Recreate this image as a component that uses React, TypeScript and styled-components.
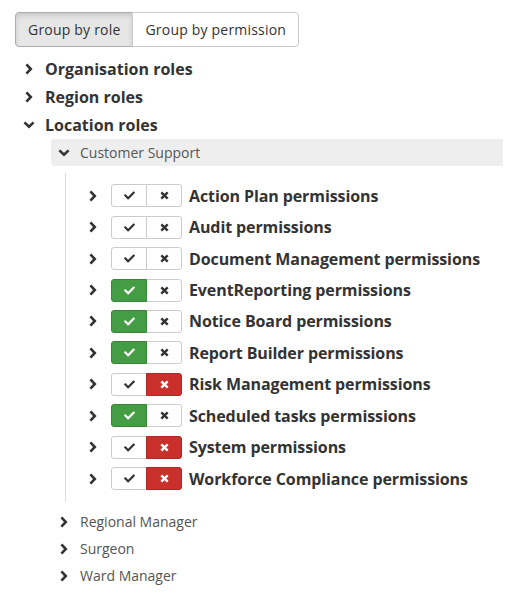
import React, {useState} from 'react'
import styled, {createGlobalStyle, css} from 'styled-components'
import {FaCheck} from 'react-icons/fa'

const GlobalStyle = createGlobalStyle`
  body {
    margin: 0;
    font-family: "Open Sans", "Noto Sans", sans-serif;
    color: #333;
    background: #fff;
  }
`

const Page = styled.div`
  padding: 12px 2px 0 15px;
`

const Toggle = styled.div`
  display: inline-flex;
`

const ToggleButton = styled.button<{ $active?: boolean }>`
  font-family: inherit;
  font-size: 14px;
  letter-spacing: 0.2px;
  line-height: 21px;
  padding: 6px 12px;
  color: #333;
  background: #fff;
  border: 1px solid #ccc;
  cursor: pointer;
  &:first-child {
    border-radius: 4px 0 0 4px;
  }
  &:last-child {
    border-radius: 0 4px 4px 0;
    margin-left: -1px;
  }
  ${p => p.$active && css`
    background: #e6e6e6;
    border-color: #adadad;
    box-shadow: inset 0 3px 5px rgba(0, 0, 0, 0.125);
  `}
`

const Tree = styled.div`
  margin: 8px 0 0 8px;
`

const TopRow = styled.div`
  display: flex;
  align-items: center;
  gap: 10px;
  height: 28px;
  font-size: 16px;
  font-weight: 700;
  color: #333;
`

const RoleList = styled.div`
  margin-left: 28px;
`

const RoleRow = styled.div<{ $open?: boolean }>`
  display: flex;
  align-items: center;
  gap: 10px;
  height: 27px;
  padding-left: 7px;
  font-size: 14px;
  color: #555;
  border-radius: 4px 0 0 4px;
  background: ${p => (p.$open ? '#eee' : 'transparent')};
`

const PermList = styled.div`
  margin: 7px 0 6px 14px;
  padding: 7px 0 8px 21px;
  border-left: 1px solid #ddd;
`

const PermRow = styled.div`
  display: flex;
  align-items: center;
  height: 31.44px;
`

const Label = styled.span`
  margin-left: 7px;
  font-size: 16px;
  font-weight: 700;
  letter-spacing: -0.1px;
  color: #333;
  white-space: nowrap;
`

const Switch = styled.div`
  display: flex;
  margin-left: 12px;
`

const SwitchButton = styled.span<{ $on?: boolean; $kind: 'allow' | 'deny' }>`
  display: flex;
  align-items: center;
  justify-content: center;
  width: 36px;
  height: 23px;
  box-sizing: border-box;
  border: 1px solid #ccc;
  background: #fff;
  color: #333;
  &:first-child {
    border-radius: 3px 0 0 3px;
  }
  &:last-child {
    border-radius: 0 3px 3px 0;
    margin-left: -1px;
  }
  ${p => p.$on && p.$kind === 'allow' && css`
    background: #449d44;
    border-color: #398439;
    color: #fff;
    position: relative;
  `}
  ${p => p.$on && p.$kind === 'deny' && css`
    background: #c9302c;
    border-color: #ac2925;
    color: #fff;
    position: relative;
  `}
`

const ChevronBox = styled.span`
  display: flex;
  align-items: center;
  justify-content: center;
  width: 12px;
  flex: none;
`

function Chevron({open}: { open?: boolean }) {
    return (
        <ChevronBox>
            {open ? (
                <svg width="12" height="8" viewBox="0 0 12 8">
                    <polyline points="1.4,1.4 6,5.8 10.6,1.4" fill="none" stroke="#333" strokeWidth="2.6"/>
                </svg>
            ) : (
                <svg width="8" height="12" viewBox="0 0 8 12">
                    <polyline points="1.4,1.4 5.8,6 1.4,10.6" fill="none" stroke="#333" strokeWidth="2.6"/>
                </svg>
            )}
        </ChevronBox>
    )
}

function Cross() {
    return (
        <svg width="9" height="9" viewBox="0 0 9 9">
            <path d="M1.3 1.3L7.7 7.7M7.7 1.3L1.3 7.7" stroke="currentColor" strokeWidth="2.4"/>
        </svg>
    )
}

type State = 'allow' | 'deny' | 'none'

const permissions: { name: string, state: State }[] = [
    {name: 'Action Plan permissions', state: 'none'},
    {name: 'Audit permissions', state: 'none'},
    {name: 'Document Management permissions', state: 'none'},
    {name: 'EventReporting permissions', state: 'allow'},
    {name: 'Notice Board permissions', state: 'allow'},
    {name: 'Report Builder permissions', state: 'allow'},
    {name: 'Risk Management permissions', state: 'deny'},
    {name: 'Scheduled tasks permissions', state: 'allow'},
    {name: 'System permissions', state: 'deny'},
    {name: 'Workforce Compliance permissions', state: 'deny'},
]

export default function App() {
    const [mode, setMode] = useState<'role' | 'permission'>('role')
    return (
        <Page>
            <GlobalStyle/>
            <Toggle>
                <ToggleButton $active={mode === 'role'} onClick={() => setMode('role')}>Group by role</ToggleButton>
                <ToggleButton $active={mode === 'permission'} onClick={() => setMode('permission')}>Group by permission</ToggleButton>
            </Toggle>
            <Tree>
                <TopRow><Chevron/>Organisation roles</TopRow>
                <TopRow><Chevron/>Region roles</TopRow>
                <TopRow><Chevron open/>Location roles</TopRow>
                <RoleList>
                    <RoleRow $open><Chevron open/>Customer Support</RoleRow>
                    <PermList>
                        {permissions.map(p => (
                            <PermRow key={p.name}>
                                <Chevron/>
                                <Switch>
                                    <SwitchButton $kind="allow" $on={p.state === 'allow'}><FaCheck size={11}/></SwitchButton>
                                    <SwitchButton $kind="deny" $on={p.state === 'deny'}><Cross/></SwitchButton>
                                </Switch>
                                <Label>{p.name}</Label>
                            </PermRow>
                        ))}
                    </PermList>
                    <RoleRow><Chevron/>Regional Manager</RoleRow>
                    <RoleRow><Chevron/>Surgeon</RoleRow>
                    <RoleRow><Chevron/>Ward Manager</RoleRow>
                </RoleList>
            </Tree>
        </Page>
    )
}
